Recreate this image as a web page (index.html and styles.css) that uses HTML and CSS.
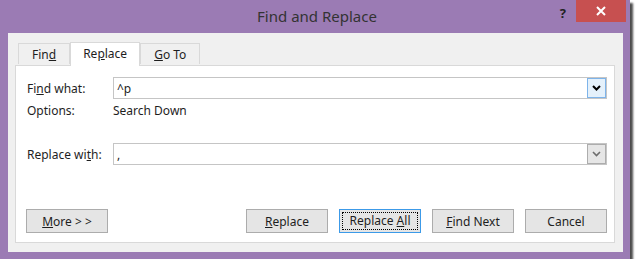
FILE: index.html
```html
<!DOCTYPE html>
<html>
<head>
    <title>Find and Replace</title>
    <meta name="viewport" content="width=device-width, initial-scale=1">
    <link rel="stylesheet" href="styles.css">
</head>
<body>
    <div class="window">
        <div class="titlebar">
            <div></div>
            <div class="title">Find and Replace</div>
            <div class="controls">
                <span class="help">?</span>
                <span class="close">
                    <svg width="10" height="10" viewBox="0 0 10 10"><path d="M1 1 L9 9 M9 1 L1 9" stroke="#fff" stroke-width="2"/></svg>
                </span>
            </div>
        </div>
        <div class="client">
            <div class="tabs">
                <div class="tab">Fin<u>d</u></div>
                <div class="tab active">Re<u>p</u>lace</div>
                <div class="tab"><u>G</u>o To</div>
            </div>
            <div class="panel">
                <div class="row">
                    <label class="label">Fi<u>n</u>d what:</label>
                    <div class="combo">
                        <span class="value">^p</span>
                        <span class="drop hot">
                            <svg width="9" height="6" viewBox="0 0 9 6"><path d="M1 1 L4.5 4.5 L8 1" fill="none" stroke="#000" stroke-width="2"/></svg>
                        </span>
                    </div>
                </div>
                <div class="row options">
                    <span class="label">Options:</span>
                    <span class="value">Search Down</span>
                </div>
                <div class="row replace-row">
                    <label class="label">Replace wi<u>t</u>h:</label>
                    <div class="combo">
                        <span class="value">,</span>
                        <span class="drop">
                            <svg width="9" height="6" viewBox="0 0 9 6"><path d="M1 1 L4.5 4.5 L8 1" fill="none" stroke="#6d6d6d" stroke-width="1.6"/></svg>
                        </span>
                    </div>
                </div>
                <div class="buttons">
                    <button class="btn"><u>M</u>ore &gt; &gt;</button>
                    <div class="right-buttons">
                        <button class="btn"><u>R</u>eplace</button>
                        <button class="btn focus"><span class="focus-rect">Replace <u>A</u>ll</span></button>
                        <button class="btn"><u>F</u>ind Next</button>
                        <button class="btn">Cancel</button>
                    </div>
                </div>
            </div>
        </div>
    </div>
</body>
</html>
```

FILE: styles.css
```css
body {
    margin: 0;
    padding: 0;
    background-color: #fff;
    font-family: "Segoe UI", "Noto Sans", sans-serif;
    font-size: 12px;
    color: #1e1e1e;
}
.window {
    width: 630px;
    height: 259px;
    background-color: #9b7bb4;
    box-shadow: 3px 3px 2px rgba(0, 0, 0, 0.7);
    display: flex;
    flex-direction: column;
}
.titlebar {
    height: 33px;
    display: grid;
    grid-template-columns: 1fr auto 1fr;
}
.title {
    font-size: 15px;
    color: #333;
    line-height: 33px;
    padding-left: 4px;
}
.controls {
    display: flex;
    justify-content: flex-end;
    align-items: flex-start;
    padding-right: 4px;
}
.help {
    font-weight: bold;
    font-size: 13px;
    color: #222;
    margin-top: 4px;
    margin-right: 10px;
}
.close {
    width: 50px;
    height: 22px;
    background-color: #c75050;
    display: flex;
    align-items: center;
    justify-content: center;
}
.client {
    flex: 1;
    margin: 0 7px 7px 8px;
    background-color: #f0f0f0;
    padding: 9px 8px 9px 7px;
    display: flex;
    flex-direction: column;
}
.tabs {
    display: flex;
    align-items: flex-end;
    padding-left: 3px;
    height: 23px;
    position: relative;
    z-index: 1;
}
.tab {
    height: 21px;
    line-height: 21px;
    padding: 0 13px;
    border: 1px solid #d9d9d9;
    border-bottom: none;
    background-color: #f0f0f0;
    box-sizing: border-box;
    margin-bottom: 1px;
}
.tab.active {
    height: 24px;
    line-height: 22px;
    background-color: #fff;
    margin-bottom: -1px;
    padding: 0 12px;
}
.panel {
    flex: 1;
    background-color: #fff;
    border: 1px solid #d9d9d9;
    padding: 11px 7px 9px 10px;
    display: flex;
    flex-direction: column;
}
.row {
    display: flex;
    align-items: center;
}
.label {
    width: 86px;
    padding-left: 1px;
}
.combo {
    flex: 1;
    height: 22px;
    box-sizing: border-box;
    border: 1px solid #c5c5c5;
    display: flex;
    align-items: center;
    justify-content: space-between;
}
.combo .value {
    padding-left: 3px;
}
.drop {
    width: 19px;
    height: 20px;
    box-sizing: border-box;
    border: 1px solid #adadad;
    background-color: #e6e6e6;
    display: flex;
    align-items: center;
    justify-content: center;
}
.drop.hot {
    border-color: #7eb4ea;
    background-color: #e5f1fb;
}
.options {
    height: 22px;
}
.options .value {
    padding-left: 0;
}
.replace-row {
    margin-top: 22px;
}
.buttons {
    margin-top: auto;
    display: flex;
    justify-content: space-between;
}
.right-buttons {
    display: flex;
    gap: 11px;
}
.btn {
    width: 82px;
    height: 24px;
    font-family: inherit;
    font-size: 12px;
    color: #1e1e1e;
    background-color: #e5e5e5;
    border: 1px solid #acacac;
    padding: 0;
}
.btn.focus {
    border-color: #3c9ae8;
    padding: 2px;
}
.focus-rect {
    display: block;
    height: 100%;
    box-sizing: border-box;
    border: 1px dotted #000;
    line-height: 16px;
}
```
